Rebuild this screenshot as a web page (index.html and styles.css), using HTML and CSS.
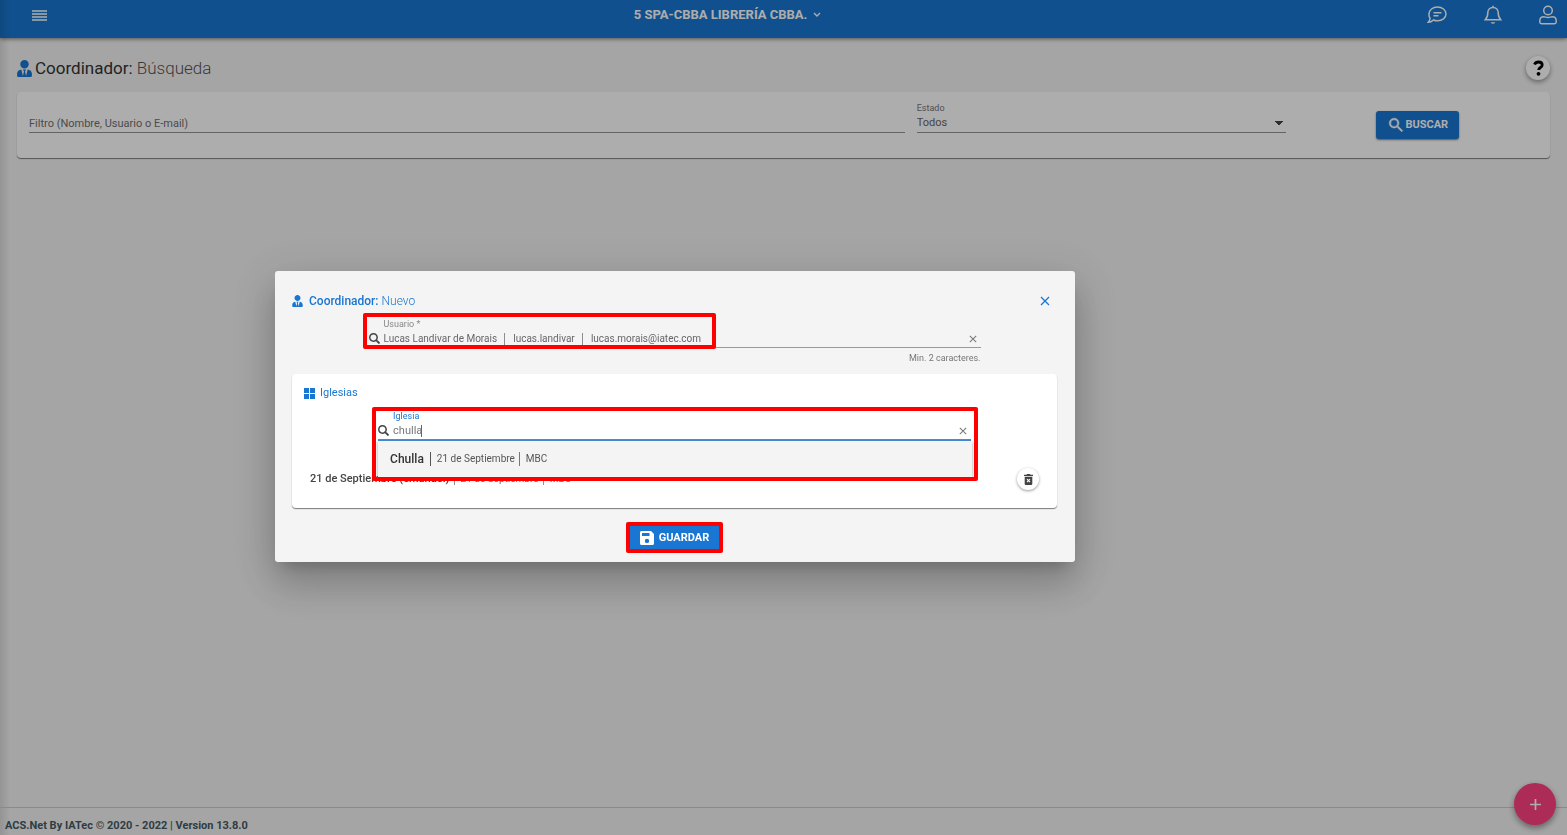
FILE: index.html
```html
<!DOCTYPE html>
<html lang="es">
<head>
<meta charset="utf-8">
<title>Coordinador</title>
<link rel="stylesheet" href="styles.css">
</head>
<body>
<svg class="defs" aria-hidden="true">
  <symbol id="tie" viewBox="0 0 448 512"><path d="M224 256c70.700 0 128-57.300 128-128S294.700 0 224 0 96 57.300 96 128s57.300 128 128 128zm95.800 32.600L272 480l-32-136 32-56h-96l32 56-32 136-47.800-191.400C56.900 292 0 350.300 0 422.400V464c0 26.500 21.500 48 48 48h352c26.500 0 48-21.500 48-48v-41.600c0-72.100-56.900-130.400-128.200-133.800z"/></symbol>
  <symbol id="search" viewBox="0 0 24 24"><path stroke="currentColor" stroke-width=".7" d="M15.500 14h-.8l-.3-.3A6.500 6.500 0 1 0 13.700 14.400l.3.300v.8l5.500 5.500 1.500-1.500zM9.500 14a4.500 4.500 0 1 1 0-9 4.500 4.500 0 0 1 0 9z"/></symbol>
  <symbol id="find" viewBox="0 0 512 512"><path d="M505 442.700 405.300 343c-4.500-4.500-10.600-7-17-7H372c27.600-35.300 44-79.700 44-128C416 93.100 322.900 0 208 0S0 93.100 0 208s93.100 208 208 208c48.300 0 92.700-16.400 128-44v16.300c0 6.400 2.500 12.500 7 17l99.700 99.700c9.400 9.400 24.600 9.400 33.900 0l28.300-28.300c9.400-9.400 9.400-24.600.1-34zM208 346c-76 0-138-62-138-138 0-76 62-138 138-138 76 0 138 62 138 138 0 76-62 138-138 138z"/></symbol>
  <symbol id="cross" viewBox="0 0 10 10"><path class="line" d="M1 1l8 8M9 1l-8 8" stroke-width="1.300"/></symbol>
</svg>

<div class="page">
  <header class="topbar">
    <button class="icon-btn" aria-label="Menú"><svg width="15" height="11" viewBox="0 0 15 11"><path d="M0 1h15M0 4h15M0 7h15M0 10h15" stroke="currentColor" stroke-width="1.600"/></svg></button>
    <button class="entity">5 SPA-CBBA LIBRERÍA CBBA.
      <svg width="8" height="6" viewBox="0 0 8 6"><path class="line" d="M1 1l3 3 3-3" stroke-width="1.400"/></svg></button>
    <nav class="tools">
      <button class="icon-btn" aria-label="Mensajes"><svg class="line" width="20" height="18" viewBox="0 0 20 18" stroke-width="1.500"><path d="M10.500 1c4.700 0 8.500 3 8.500 6.900s-3.800 6.900-8.500 6.900c-1.500 0-2.900-.3-4.100-.8C5 15.500 3.200 16.300 1.200 16.300c1-1 1.700-2.500 1.900-4A6.300 6.300 0 0 1 2 7.900C2 4 5.800 1 10.500 1z"/><path d="M6.500 6.700h8M6.500 9.700h5"/></svg></button>
      <button class="icon-btn" aria-label="Notificaciones"><svg class="line" width="18" height="20" viewBox="0 0 18 20" stroke-width="1.500"><path d="M9 2.500c-3.200 0-5.200 2.300-5.200 5.300 0 4-1 5.500-2.600 7h15.600c-1.600-1.500-2.600-3-2.600-7 0-3-2-5.300-5.200-5.300zM9 .8v1.700"/><path d="M6.800 17.200a2.300 2.300 0 0 0 4.400 0z" fill="currentColor" stroke="none"/></svg></button>
      <button class="icon-btn" aria-label="Cuenta"><svg class="line" width="18" height="20" viewBox="0 0 18 20" stroke-width="1.500"><circle cx="9" cy="5.500" r="4.300"/><path d="M4.800 11.800c1.500 0 2.200.7 4.200.7s2.700-.7 4.200-.7c2.300 0 4 1.700 4 4V17c0 1-.7 1.700-1.700 1.700h-13C1.500 18.700.8 18 .8 17v-1.200c0-2.300 1.700-4 4-4z"/></svg></button>
    </nav>
  </header>

  <main class="content">
    <div class="heading">
      <h1 class="title"><svg class="title-icon"><use href="#tie"/></svg><span>Coordinador: <span class="light">Búsqueda</span></span></h1>
      <button class="help" aria-label="Ayuda"><svg width="11" height="16" viewBox="0 0 11 16"><path class="line" d="M1.500 4.500C2.300 2.800 3.600 2 5.500 2 7.700 2 9.200 3.200 9.200 4.900c0 2.700-3.500 2.500-3.500 5.100" stroke-width="2.800"/><circle cx="5.500" cy="13.800" r="1.900"/></svg></button>
    </div>
    <form class="card filters">
      <label class="field"><span class="field-label">&nbsp;</span>
        <input class="field-input" type="text" aria-label="Filtro" placeholder="Filtro (Nombre, Usuario o E-mail)"></label>
      <label class="field"><span class="field-label">Estado</span>
        <select class="field-input field-select"><option>Todos</option></select></label>
      <button class="btn btn-search" type="button"><svg width="18" height="18"><use href="#search"/></svg>BUSCAR</button>
    </form>
  </main>

  <button class="fab" aria-label="Agregar"><svg width="11" height="11" viewBox="0 0 11 11"><path d="M5.500 0v11M0 5.500h11" stroke="currentColor" stroke-width="1.700"/></svg></button>
  <footer class="footer">ACS.Net By IATec © 2020 - 2022 | Version 13.8.0</footer>
</div>

<div class="backdrop">
  <section class="modal" role="dialog" aria-labelledby="modal-title">
    <div class="modal-head">
      <h2 class="modal-title" id="modal-title"><svg class="modal-icon"><use href="#tie"/></svg><span>Coordinador: <span class="light">Nuevo</span></span></h2>
      <button class="icon-btn" aria-label="Cerrar"><svg width="10" height="10"><use href="#cross"/></svg></button>
    </div>

    <div class="lookup">
      <label class="lookup-label" for="user">Usuario *</label>
      <div class="lookup-line">
        <svg class="find"><use href="#find"/></svg>
        <input class="lookup-input chosen" id="user" type="text" value="Lucas Landivar de Morais  │  lucas.landivar  │  lucas.morais@iatec.com">
        <button class="icon-btn clear" aria-label="Borrar usuario"><svg width="8" height="8"><use href="#cross"/></svg></button>
      </div>
      <p class="hint">Min. 2 caracteres.</p>
      <span class="mark mark-user"></span>
    </div>

    <section class="card churches">
      <h3 class="card-title"><svg width="11" height="11" viewBox="0 0 11 11"><path d="M0 0h5v5H0zM6 0h5v5H6zM0 6h5v5H0zM6 6h5v5H6z"/></svg>Iglesias</h3>
      <div class="lookup active">
        <label class="lookup-label" for="church">Iglesia</label>
        <div class="lookup-line">
          <svg class="find"><use href="#find"/></svg>
          <span class="typed"><input class="lookup-input" id="church" type="text" value="chulla"><span class="caret"></span></span>
          <button class="icon-btn clear" aria-label="Borrar iglesia"><svg width="8" height="8"><use href="#cross"/></svg></button>
        </div>
        <div class="options" role="listbox"><div class="option" role="option"><b class="option-name">Chulla</b><span>21 de Septiembre</span><span class="option-org">MBC</span></div></div>
        <span class="mark mark-church"></span>
      </div>
      <div class="row">
        <p class="row-text"><b>21 de Septiembre (emanuel)</b> │ 21 de Septiembre │ MBC</p>
        <button class="trash" aria-label="Eliminar"><svg width="9" height="11" viewBox="0 0 9 11"><path d="M0 .8h2.500L3 0h3l.5.8H9V2H0z"/><path d="M.7 2.700h7.600v7c0 .8-.5 1.300-1.200 1.300H1.900C1.200 11 .7 10.500.7 9.700z"/><path d="M3 5.200l3 3M6 5.200l-3 3" stroke="#fff" stroke-width="1.100"/></svg></button>
      </div>
    </section>

    <div class="actions">
      <button class="btn btn-save"><svg width="14" height="14" viewBox="0 0 14 14"><path fill-rule="evenodd" d="M1.500 0H11l3 3v9.500c0 .8-.7 1.500-1.500 1.500h-11C.7 14 0 13.300 0 12.500v-11C0 .7.7 0 1.500 0zM2 2v3h7.500V2zM7 7.700a2.200 2.200 0 1 0 0 4.400 2.200 2.200 0 0 0 0-4.400z"/></svg>GUARDAR</button>
    </div>
  </section>
</div>
</body>
</html>
```
FILE: styles.css
```css
* { box-sizing: border-box; }
body { margin: 0; font: 11px/14px Roboto, "Liberation Sans", sans-serif; color: #666; background: #f4f4f4; }
h1, h2, h3, p { margin: 0; font-weight: 500; }
button, input, select { font: inherit; color: inherit; border: 0; padding: 0; margin: 0; background: none; border-radius: 0; outline: 0; }
svg { fill: currentColor; display: block; flex: none; }
.line { fill: none; stroke: currentColor; }
.defs { position: absolute; width: 0; height: 0; }
.icon-btn { display: flex; }
.light { font-weight: 300; }

.page { min-height: 100vh; display: flex; flex-direction: column; background: linear-gradient(90deg, rgba(0,0,0,.1), transparent 10px); }
.topbar { display: grid; grid-template-columns: 9fr auto 11fr; align-items: center; height: 38px; padding: 0 10px 8px 32px; background: linear-gradient(90deg, rgba(0,0,0,.1), transparent 10px), #1976d2; color: #fff; box-shadow: 0 1px 4px rgba(0,0,0,.5); }
.entity { display: flex; align-items: center; gap: 6px; font-size: 13px; font-weight: 700; }
.tools { display: flex; justify-content: flex-end; align-items: center; gap: 37px; }

.content { flex: 1; padding: 15px 17px; }
.heading { display: flex; justify-content: space-between; align-items: center; height: 30px; }
.title { display: flex; align-items: center; gap: 3px; font-size: 17px; line-height: 24px; font-weight: 400; color: #333; }
.title .light { color: #555; }
.title-icon { width: 15px; height: 17px; color: #1976d2; }
.help { display: flex; align-items: center; justify-content: center; width: 24px; height: 24px; border-radius: 50%; background: #fff; color: #000; box-shadow: 0 2px 5px rgba(0,0,0,.4); }

.card { background: #fff; border-radius: 4px; box-shadow: 0 1px 1px rgba(0,0,0,.5); }
.filters { display: grid; grid-template-columns: 470fr 198fr 129fr; gap: 12px; margin-top: 9px; padding: 9px 12px 25px; }
.field { display: flex; flex-direction: column; border-bottom: 1px solid #949494; }
.field-label { font-size: 9px; line-height: 15px; color: #777; }
.field-input { height: 16px; padding-bottom: 2px; width: 100%; line-height: 14px; }
.field-input::placeholder { color: #707070; opacity: 1; }
.field-select { appearance: none; background: conic-gradient(from -45deg at 50% 100%, #444 90deg, transparent 0) right 3px top 5px / 8px 4px no-repeat; }
.btn { display: flex; align-items: center; justify-content: center; background: #1976d2; color: #fff; font-weight: 700; }
.btn-search { justify-self: center; align-self: end; width: 83px; height: 28px; margin-bottom: -6px; border-radius: 3px; box-shadow: 0 1px 2px rgba(0,0,0,.5); }

.footer { height: 28px; padding: 11px 5px 3px; border-top: 1px solid #ccc; font-weight: 700; color: #455a64; }
.fab { position: fixed; right: 11px; bottom: 10px; width: 42px; height: 42px; border-radius: 50%; background: #ff4081; color: #fff; display: flex; align-items: center; justify-content: center; box-shadow: 0 3px 6px rgba(0,0,0,.4); }

.backdrop { position: fixed; inset: 0; display: flex; align-items: center; justify-content: center; padding: 0 217px 2px 0; background: rgba(0,0,0,.32); }
.modal { width: 800px; max-width: 100%; padding: 21px 18px 9px 17px; background: #f4f4f4; border-radius: 3px; box-shadow: 0 11px 15px -7px rgba(0,0,0,.2), 0 24px 38px 3px rgba(0,0,0,.14), 0 9px 46px 8px rgba(0,0,0,.12); }
.modal-head { display: flex; justify-content: space-between; align-items: center; height: 17px; padding-right: 7px; color: #1976d2; }
.modal-title { display: flex; align-items: center; gap: 6px; font-size: 12px; }
.modal-icon { width: 11px; height: 12px; }

.lookup { position: relative; margin: 0 10%; padding-top: 8px; }
.lookup-label { display: block; margin-left: 15px; font-size: 9px; line-height: 14px; color: #888; }
.lookup-line { display: flex; align-items: center; gap: 4px; height: 17px; padding: 0 4px 1px 0; border-bottom: 1px solid #999; }
.lookup-input { flex: 1; width: 100%; height: 14px; color: #777; }
.chosen { font-size: 10px; color: #666; }
.find { width: 11px; height: 11px; color: #444; }
.clear { color: #777; }
.hint { margin-top: 4px; font-size: 9px; line-height: 12px; font-weight: 400; text-align: right; color: #777; }
.mark { position: absolute; z-index: 3; border: 4px solid #f00; border-radius: 2px; pointer-events: none; }
.mark-user { left: -6px; top: 4px; width: 353px; height: 36px; }

.churches { margin-top: 10px; padding: 11px 12px 18px; }
.card-title { display: flex; align-items: center; gap: 5px; color: #1976d2; font-size: 11px; font-weight: 400; line-height: 16px; }
.active .lookup-label { color: #1976d2; }
.active .lookup-line { border-bottom: 2px solid #4a90d9; height: 18px; }
.typed { position: relative; flex: 1; display: flex; }
.caret { position: absolute; left: 28px; top: 1px; width: 1px; height: 12px; background: #1976d2; }
.options { position: absolute; z-index: 2; left: 0; right: -1px; top: 100%; height: 36px; background: #f4f4f4; box-shadow: 0 1px 3px rgba(0,0,0,.4); }
.option { display: flex; align-items: center; height: 36px; padding-left: 12px; font-size: 10px; color: #555; }
.option-name { font-size: 12px; font-weight: 500; color: #333; padding-right: 6px; margin-right: 6px; border-right: 1px solid #555; }
.option-org { margin-left: 4px; padding-left: 6px; border-left: 1px solid #777; }
.mark-church { left: -6px; right: -7px; top: 6px; bottom: -40px; }
.row { display: flex; justify-content: space-between; align-items: center; margin: 27px 6px 0; height: 22px; }
.row-text { font-size: 10px; font-weight: 400; }
.row-text b { font-size: 11px; font-weight: 500; color: #444; }
.trash { display: flex; align-items: center; justify-content: center; width: 22px; height: 22px; border-radius: 50%; background: #fff; color: #444; box-shadow: 0 1px 3px rgba(0,0,0,.4); }

.actions { display: flex; justify-content: center; margin-top: 14px; }
.btn-save { gap: 5px; width: 97px; height: 31px; border: 4px solid #f00; border-radius: 2px; }
```
